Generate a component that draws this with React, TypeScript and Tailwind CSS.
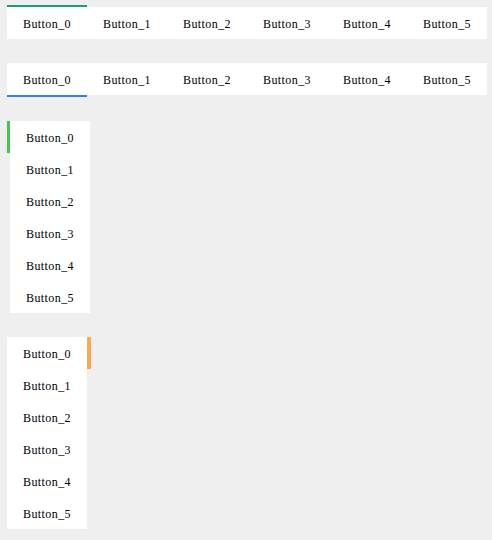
const buttons = ["Button_0", "Button_1", "Button_2", "Button_3", "Button_4", "Button_5"];

const label = "font-['Liberation_Serif',serif] text-[12px] tracking-[0.4px] text-black pt-[2px]";

function TopTabs() {
  return (
    <div className="flex flex-col">
      <div className="h-[2px] w-20 bg-[#1a9e78]" />
      <div className="flex w-[480px] bg-white">
        {buttons.map((b) => (
          <div key={b} className={`flex h-8 w-20 items-center justify-center ${label}`}>
            {b}
          </div>
        ))}
      </div>
    </div>
  );
}

function BottomTabs() {
  return (
    <div className="flex flex-col">
      <div className="flex w-[480px] bg-white">
        {buttons.map((b) => (
          <div key={b} className={`flex h-8 w-20 items-center justify-center ${label}`}>
            {b}
          </div>
        ))}
      </div>
      <div className="h-[2px] w-20 bg-[#2a82f4]" />
    </div>
  );
}

function SideTabs({ side }: { side: "left" | "right" }) {
  const panel = (
    <div className="flex w-20 flex-col bg-white">
      {buttons.map((b) => (
        <div key={b} className={`flex h-8 items-center justify-center ${label}`}>
          {b}
        </div>
      ))}
    </div>
  );
  return (
    <div className="flex">
      {side === "left" && <div className="h-8 w-[3px] bg-[#3cca4c]" />}
      {panel}
      {side === "right" && <div className="h-8 w-1 bg-[#fca84c]" />}
    </div>
  );
}

export default function App() {
  return (
    <div className="min-h-[540px] w-[492px] bg-[#efefef] pl-[7px] pt-[5px]">
      <div className="flex flex-col gap-6">
        <TopTabs />
        <BottomTabs />
        <SideTabs side="left" />
        <SideTabs side="right" />
      </div>
    </div>
  );
}
